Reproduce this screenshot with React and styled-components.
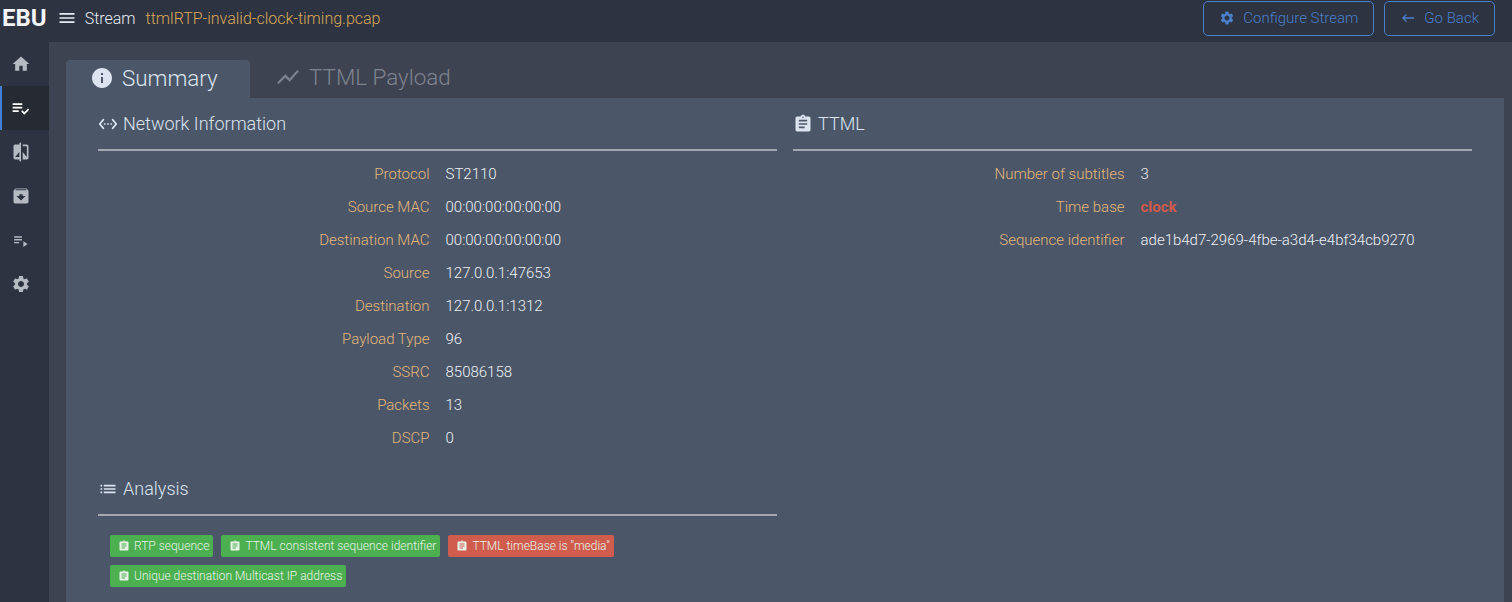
import styled, { createGlobalStyle } from "styled-components";
import {
  MdArchive,
  MdAssignment,
  MdCompare,
  MdHome,
  MdInfo,
  MdKeyboardBackspace,
  MdList,
  MdMenu,
  MdPlaylistAddCheck,
  MdPlaylistPlay,
  MdSettings,
  MdSettingsEthernet,
  MdShowChart,
} from "react-icons/md";

const network = [
  ["Protocol", "ST2110"],
  ["Source MAC", "00:00:00:00:00:00"],
  ["Destination MAC", "00:00:00:00:00:00"],
  ["Source", "127.0.0.1:47653"],
  ["Destination", "127.0.0.1:1312"],
  ["Payload Type", "96"],
  ["SSRC", "85086158"],
  ["Packets", "13"],
  ["DSCP", "0"],
];

const ttml = [
  ["Number of subtitles", "3"],
  ["Time base", "clock", true],
  ["Sequence identifier", "ade1b4d7-2969-4fbe-a3d4-e4bf34cb9270"],
];

const checks = [
  ["RTP sequence", false],
  ["TTML consistent sequence identifier", false],
  ['TTML timeBase is "media"', true],
  ["Unique destination Multicast IP address", false],
];

const navItems = [
  [MdHome, 20],
  [MdPlaylistAddCheck, 21],
  [MdCompare, 20],
  [MdArchive, 20],
  [MdPlaylistPlay, 17],
  [MdSettings, 20],
];

const App = () => {
  return (
    <Page>
      <GlobalStyle />
      <Header>
        <Logo>EBU</Logo>
        <MenuIcon />
        <Title>Stream</Title>
        <FileName>ttmlRTP-invalid-clock-timing.pcap</FileName>
        <HeaderActions>
          <OutlineButton>
            <MdSettings size={16} />
            Configure Stream
          </OutlineButton>
          <OutlineButton>
            <MdKeyboardBackspace size={16} />
            Go Back
          </OutlineButton>
        </HeaderActions>
      </Header>
      <Body>
        <Sidebar>
          {navItems.map(([Icon, size], i) => (
            <NavItem key={i} $active={i === 1}>
              <Icon size={size} />
            </NavItem>
          ))}
        </Sidebar>
        <Main>
          <Tabs>
            <Tab $active>
              <MdInfo size={24} />
              Summary
            </Tab>
            <Tab>
              <MdShowChart size={26} />
              TTML Payload
            </Tab>
          </Tabs>
          <Panel>
            <Column>
              <SectionTitle>
                <MdSettingsEthernet size={20} />
                Network Information
              </SectionTitle>
              <Rule />
              <Rows>
                {network.map(([label, value]) => (
                  <Row key={label}>
                    <Label>{label}</Label>
                    <Value>{value}</Value>
                  </Row>
                ))}
              </Rows>
              <AnalysisTitle>
                <MdList size={20} />
                Analysis
              </AnalysisTitle>
              <Rule />
              <Badges>
                {checks.map(([text, failed]) => (
                  <Badge key={text} $failed={failed}>
                    <MdAssignment size={12} />
                    {text}
                  </Badge>
                ))}
              </Badges>
            </Column>
            <Column>
              <SectionTitle>
                <MdAssignment size={20} />
                TTML
              </SectionTitle>
              <Rule />
              <Rows>
                {ttml.map(([label, value, bad]) => (
                  <Row key={label}>
                    <Label>{label}</Label>
                    <Value $bad={bad}>{value}</Value>
                  </Row>
                ))}
              </Rows>
            </Column>
          </Panel>
        </Main>
      </Body>
    </Page>
  );
};

const GlobalStyle = createGlobalStyle`
  html, body {
    margin: 0;
    height: 100%;
    overflow: hidden;
    background: #2d3340;
  }
  #root {
    height: 100%;
  }
  * {
    box-sizing: border-box;
  }
`;

const Page = styled.div`
  display: flex;
  flex-direction: column;
  height: 602px;
  font-family: Roboto, "Liberation Sans", sans-serif;
  font-weight: 300;
  color: #dbe4f0;
`;

const Header = styled.header`
  display: flex;
  align-items: center;
  flex: 0 0 42px;
  height: 42px;
  padding: 0 17px 6px 2px;
  background: #2d3340;
`;

const Logo = styled.span`
  font-size: 24px;
  font-weight: 700;
  color: #f4f6f9;
  margin-right: 10px;
`;

const MenuIcon = styled(MdMenu)`
  width: 20px;
  height: 20px;
  color: #e6ebf2;
  margin-right: 8px;
`;

const Title = styled.span`
  font-size: 16px;
  font-weight: 300;
  color: #e8eef6;
  margin-right: 10px;
`;

const FileName = styled.span`
  font-size: 16px;
  color: #dba957;
`;

const HeaderActions = styled.div`
  display: flex;
  gap: 10px;
  margin-left: auto;
`;

const OutlineButton = styled.button`
  display: flex;
  align-items: center;
  justify-content: center;
  gap: 8px;
  height: 35px;
  padding: 0 15px;
  border: 1px solid #4a7fc9;
  border-radius: 5px;
  background: transparent;
  color: #4a7fc9;
  font-family: inherit;
  font-size: 15px;
  font-weight: 300;
`;

const Body = styled.div`
  display: flex;
  flex: 1;
  min-height: 0;
`;

const Sidebar = styled.nav`
  flex: 0 0 49px;
  background: #2d3340;
`;

const NavItem = styled.div`
  display: flex;
  align-items: center;
  justify-content: center;
  height: 44px;
  padding-right: 10px;
  color: ${(p) => (p.$active ? "#ffffff" : "#b6bbc3")};
  background: ${(p) => (p.$active ? "#262a33" : "transparent")};
  border-left: 2px solid ${(p) => (p.$active ? "#3f7fd6" : "transparent")};
`;

const Main = styled.main`
  flex: 1;
  min-width: 0;
  padding: 18px 8px 0 17px;
  background: #3d4351;
`;

const Tabs = styled.div`
  display: flex;
  height: 38px;
`;

const Tab = styled.div`
  display: flex;
  align-items: center;
  gap: 8px;
  width: ${(p) => (p.$active ? "184px" : "auto")};
  padding: 0 0 ${(p) => (p.$active ? "2px" : "4px")} ${(p) => (p.$active ? "24px" : "25px")};
  border-radius: 4px 4px 0 0;
  font-size: 22.4px;
  background: ${(p) => (p.$active ? "#4b5668" : "transparent")};
  color: ${(p) => (p.$active ? "#dbe4f0" : "#7d838e")};
`;

const Panel = styled.section`
  display: grid;
  grid-template-columns: 1fr 1fr;
  gap: 16px;
  height: 504px;
  padding: 0 32px;
  background: #4b5668;
`;

const Column = styled.div`
  min-width: 0;
`;

const SectionTitle = styled.h2`
  display: flex;
  align-items: center;
  gap: 5px;
  height: 51px;
  margin: 0;
  font-size: 18px;
  font-weight: 300;
`;

const AnalysisTitle = styled(SectionTitle)`
  margin-top: 9px;
`;

const Rule = styled.hr`
  height: 2px;
  margin: 0;
  border: 0;
  background: #a3a8b0;
`;

const Rows = styled.div`
  padding-top: 6px;
`;

const Row = styled.div`
  display: grid;
  grid-template-columns: 1fr 1fr;
  gap: 16px;
  height: 33px;
  align-items: center;
  font-size: 15px;
`;

const Label = styled.span`
  text-align: right;
  color: #e3b778;
`;

const Value = styled.span`
  color: ${(p) => (p.$bad ? "#cf5a4c" : "#eef2f7")};
  font-weight: ${(p) => (p.$bad ? 700 : 300)};
`;

const Badges = styled.div`
  display: flex;
  flex-wrap: wrap;
  gap: 8px;
  padding: 19px 12px 0;
`;

const Badge = styled.span`
  display: inline-flex;
  align-items: center;
  gap: 4px;
  height: 22px;
  padding: 0 4px 0 8px;
  border-radius: 2px;
  font-size: 12px;
  color: #e8f4e8;
  background: ${(p) => (p.$failed ? "#d05c4e" : "#4caf50")};
`;

export default App;
